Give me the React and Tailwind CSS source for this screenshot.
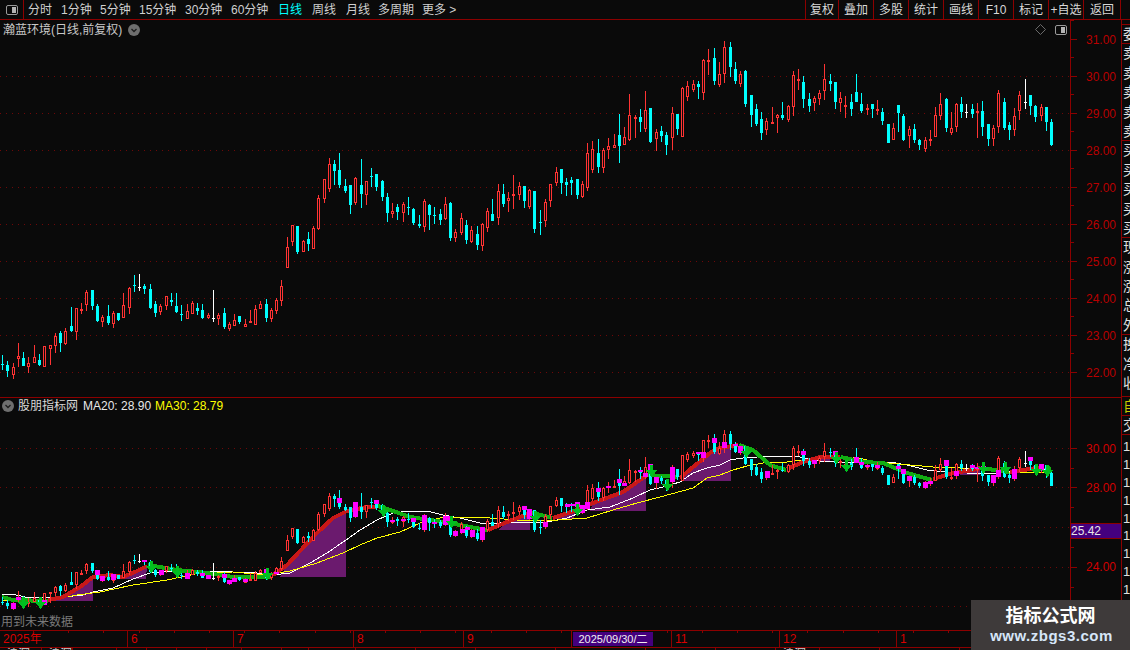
const A = [
[7,'c',285,312,315,330],[22,'c',303,315,333,350],[40,'r',309,321,345,358],[55,'r',249,288,297,320],[70,'c',276,294,318,318],[85,'r',291,309,321,338],[103,'r',255,291,309,309],[118,'c',282,300,315,318],[133,'r',258,258,321,321],[151,'r',255,255,267,315],[166,'r',219,228,258,278],[181,'c',213,219,249,275],[196,'r',204,213,252,255],[214,'c',141,198,213,216],[229,'r',144,144,216,240],[244,'r',129,148,150,162],[259,'r',90,96,135,153],[277,'c',90,90,138,150],[292,'c',132,138,183,186],[307,'r',165,171,186,201],[325,'c',135,168,189,195],[340,'r',153,159,192,204],[355,'c',159,159,180,183],[370,'r',99,135,174,174],[388,'r',81,84,144,162],[403,'c',45,75,78,96],[418,'w',42,81,84,93],[433,'c',72,78,87,102],[451,'c',72,87,144,147],[466,'c',123,132,159,171],[481,'r',132,138,156,165],[499,'r',108,108,138,150],[514,'c',99,120,126,138],[529,'c',99,138,156,159],[544,'c',135,162,165,183],[562,'r',132,153,177,177],[577,'r',123,129,162,162],[592,'c',129,144,153,165],[607,'c',132,150,174,177],[625,'r',159,165,174,177],[640,'w',90,174,177,186],[655,'r',159,165,177,195],[673,'c',144,159,201,207],[688,'r',186,192,207,213],[703,'r',162,180,198,198],[718,'c',168,168,186,192],[736,'r',177,192,201,201],[751,'r',150,183,189,189],[766,'r',135,147,195,195],[781,'r',123,132,147,147],[799,'c',117,132,174,186],[814,'r',144,150,177,186],[829,'r',114,120,153,162],[844,'r',60,78,123,138],
];
const B = [
[22,'r',291,321,384,384],[37,'r',255,255,306,318],[52,'c',258,258,336,342],[70,'r',300,303,336,336],[85,'c',276,297,312,333],[100,'r',258,264,327,327],[115,'r',165,174,267,270],[133,'r',117,117,177,189],[148,'r',54,72,147,156],[163,'c',60,72,93,135],[178,'c',39,90,135,144],[196,'c',117,138,153,159],[211,'c',135,135,195,222],[226,'r',111,114,189,195],[244,'c',57,135,162,204],[259,'r',123,123,165,195],[274,'c',84,108,111,141],[289,'c',102,102,141,153],[307,'c',120,123,171,183],[322,'c',159,171,219,246],[337,'r',189,213,222,234],[352,'c',192,201,216,240],[370,'r',186,192,219,246],[385,'c',171,201,204,225],[400,'c',204,207,249,255],[418,'c',225,252,258,264],[433,'r',177,183,261,276],[448,'c',192,195,225,270],[463,'c',201,225,228,252],[481,'c',207,222,240,255],[496,'r',171,192,237,240],[511,'c',186,189,294,303],[526,'r',267,276,294,306],[544,'r',219,234,279,285],[559,'c',240,255,300,312],[574,'r',258,270,306,309],[592,'c',258,282,315,330],[607,'r',249,252,318,333],[622,'r',204,213,264,276],[637,'c',177,222,243,243],[655,'r',132,153,234,255],[670,'c',132,162,192,201],[685,'r',156,174,183,216],[700,'r',105,162,168,207],[718,'r',126,138,165,180],[733,'c',138,138,183,204],[748,'r',147,150,201,207],[763,'c',153,153,267,279],[781,'c',210,246,249,285],[796,'r',177,186,243,261],[811,'r',132,132,183,201],[829,'r',81,96,129,138],[844,'c',87,87,129,162],[859,'c',114,126,135,168],[874,'c',111,120,129,165],[892,'c',117,117,165,177],[907,'r',123,132,171,174],[922,'r',9,39,144,153],[937,'r',3,27,90,99],[955,'c',-3,39,81,99],[970,'r',24,30,84,99],[985,'r',-6,18,30,57],[1003,'r',-17,15,24,24],[1018,'c',-78,-15,18,69],[1033,'r',-39,-9,15,15],[1048,'r',-138,-75,0,3],[1065,'r',-75,-69,-63,-6],[1080,'c',-93,-69,-54,-24],
];
const C = [
[16,'r',183,240,297,306],[31,'c',234,234,336,339],[49,'r',297,306,327,363],[64,'c',288,303,318,336],[79,'c',306,315,345,375],[97,'r',231,249,324,360],[112,'c',252,252,297,315],[127,'r',171,174,321,321],[142,'r',153,168,201,213],[160,'r',150,162,180,186],[175,'c',153,162,171,207],[190,'r',87,90,189,210],[205,'r',57,90,93,135],[223,'c',54,84,153,165],[238,'r',96,132,165,171],[253,'r',33,51,132,159],[271,'c',36,51,111,141],[286,'c',96,117,153,162],[301,'r',123,132,162,171],[316,'c',120,123,222,231],[334,'c',195,195,255,291],[349,'c',222,237,282,288],[364,'c',246,267,309,330],[379,'r',264,273,300,315],[397,'r',231,276,279,282],[412,'r',252,255,264,309],[427,'c',216,255,264,270],[445,'r',225,228,270,276],[460,'r',123,135,231,258],[475,'r',117,147,150,180],[490,'c',138,156,207,234],[508,'c',189,207,228,246],[523,'r',198,204,219,243],[538,'r',180,189,207,225],[553,'r',102,147,183,210],[571,'c',132,153,162,183],[586,'c',156,156,216,237],[601,'r',186,204,219,246],[616,'r',198,225,228,264],[634,'c',192,216,237,258],[649,'c',132,186,216,216],[664,'c',189,222,243,249],[682,'r',222,234,240,255],[697,'c',222,222,237,264],[712,'r',210,237,243,255],[727,'c',234,246,273,285],[745,'c',282,282,339,339],[760,'r',279,294,330,330],[775,'c',225,225,249,306],[790,'c',252,258,330,333],[808,'r',288,297,318,354],[823,'c',282,297,330,339],[838,'c',327,330,345,360],[856,'r',321,330,357,366],[871,'r',300,327,333,348],[886,'r',231,255,321,321],[901,'r',189,222,258,270],[919,'c',204,207,294,306],[934,'r',246,294,309,315],[949,'r',219,222,291,306],[964,'c',201,222,246,264],[979,'w',222,246,249,264],[997,'c',222,237,252,264],[1012,'r',219,243,249,324],[1027,'c',213,243,291,318],[1045,'c',282,282,327,348],[1060,'r',285,294,327,348],[1075,'r',180,189,291,309],[1093,'c',204,216,294,300],[1108,'c',276,285,300,330],[1123,'r',234,258,300,318],[1138,'r',183,195,243,270],[1156,'w',147,216,219,237],[1171,'c',195,195,228,255],[1186,'c',225,228,261,276],[1204,'r',222,231,258,273],[1219,'c',231,231,276,303],[1234,'c',267,276,345,348],
];
const toReal = (list, x0, y0) => list.map(([zx, t, a, b, c, d]) => ({ x: Math.floor(x0 + zx / 3), t, hi: y0 + a / 3, top: y0 + b / 3, bot: y0 + c / 3, lo: y0 + d / 3 }));
const candles = [...toReal(A, 0, 260), ...toReal(B, 280, 140), ...toReal(C, 640, 30)];

const COLORS = { r: '#ff3333', c: '#00ffff', w: '#ffffff' };
function Candle({ d, map }) {
  const hi = Math.round(map(d.hi)), top = Math.round(map(d.top)), bot = Math.round(map(d.bot)), lo = Math.round(map(d.lo));
  const col = COLORS[d.t];
  return (
    <g>
      <rect x={d.x} y={hi} width={1} height={Math.max(lo - hi, 1)} fill={col} />
      {d.t === 'r' ? (
        <rect x={d.x - 0.5} y={top + 0.5} width={2} height={Math.max(bot - top - 1, 1)} fill="#0a0a0a" stroke={col} strokeWidth={1} />
      ) : d.t === 'w' ? (
        <rect x={d.x - 1} y={top} width={3} height={1} fill={col} />
      ) : (
        <rect x={d.x - 1} y={top} width={3} height={Math.max(bot - top, 1)} fill={col} />
      )}
    </g>
  );
}
const same = (y) => y;
const low = (y) => 449 + (y - 76) * 0.5315;

const UPPER_GRID = [76, 113, 150, 187, 224, 261, 298, 335, 372];
const LOWER_GRID = [448, 487, 527, 567, 606];
const Grid = ({ ys }) => ys.map((y) => <line key={y} x1="0" x2="1070" y1={y + 0.5} y2={y + 0.5} stroke="#6e0808" strokeWidth="1" strokeDasharray="1 5" />);

const WHITE = '2,594 16,595 30,598 63,597 83,595 93,592 113,588 133,579 150,573 170,571 190,571 213,571 233,572 257,573 273,575 290,573 310,563 327,553 346,540 360,530 377,520 393,513 410,511 427,511 443,515 460,518 480,523 500,523 527,522 547,522 567,518 587,510 610,507 633,498 650,490 663,487 680,482 693,473 707,468 720,465 730,460 743,458 757,457 770,456 785,456 800,457 820,461 837,462 860,462 890,462 907,465 927,470 947,472 967,473 997,473 1020,470 1047,469';
const YELLOW = '2,600 50,600 77,595 100,592 133,585 167,580 200,573 233,572 267,575 290,571 317,563 343,553 360,545 377,538 400,532 420,523 440,518 457,517 473,517 490,518 517,520 543,521 587,518 613,510 637,503 660,497 693,488 707,478 720,475 733,470 747,466 763,463 787,462 820,458 853,457 877,462 910,465 933,467 960,468 980,468 1007,472 1030,472 1050,473';
const RED = [
  '48,600 63,597 80,587 93,577 110,575 123,577 135,572 147,566',
  '273,575 287,565 300,551 317,533 333,518 347,511 367,507 377,507',
  '488,530 507,522 530,513',
  '553,518 577,510 593,503 623,492 647,475',
  '680,478 693,467 710,453 720,448 738,445',
  '787,469 803,462 820,457 840,457',
  '933,479 953,473 973,470 980,468',
  '1010,472 1030,469 1044,467',
];
const GREEN = [
  '2,597 13,600 48,601',
  '148,565 177,570 207,573 233,577 272,577',
  '378,506 393,511 410,517 430,520 450,523 470,527 487,530',
  '530,512 552,518',
  '648,475 677,477',
  '739,445 753,450 770,465 786,470',
  '841,457 863,462 883,463 907,473 932,480',
  '981,468 1009,472',
  '1045,467 1051,469',
];
const PURPLE = [
  '45,601 63,597 80,587 93,578 93,601',
  '123,579 135,572 147,566 146,579',
  '280,577 287,565 300,551 317,533 333,518 346,511 346,577',
  '498,530 507,522 530,513 530,530',
  '552,519 577,510 573,519',
  '590,511 593,503 623,492 646,477 646,511',
  '682,481 682,478 693,467 710,453 731,447 731,481',
  '820,458 830,458 830,462 820,462',
  '960,470 980,470 980,475 960,475',
];
const MAGENTA = [[13,603,608],[18,597,599],[44,600,604],[97,570,574],[102,576,580],[113,574,579],[144,560,561],[161,570,574],[187,573,578],[202,573,575],[208,575,578],[224,574,577],[229,580,583],[234,578,581],[245,579,581],[266,569,572],[276,572,573],[339,498,502],[355,502,516],[376,500,503],[392,520,521],[403,519,520],[413,518,521],[424,515,529],[434,522,523],[445,516,524],[450,516,521],[455,531,535],[462,529,532],[467,527,529],[472,530,536],[482,527,539],[524,506,509],[529,509,518],[545,522,526],[567,504,506],[572,504,505],[577,502,506],[582,505,512],[587,502,508],[598,488,491],[608,486,487],[619,479,482],[624,483,485],[640,470,471],[645,473,476],[650,464,470],[656,477,482],[672,467,481],[698,452,453],[703,452,457],[714,438,442],[724,442,447],[735,444,445],[740,446,452],[767,471,477],[803,451,454],[814,460,463],[835,451,454],[856,457,462],[861,462,464],[867,465,466],[877,465,467],[898,466,468],[903,469,473],[909,476,480],[925,482,487],[930,481,483],[946,460,465],[956,471,475],[972,465,467],[977,467,468],[983,466,469],[993,475,482],[998,470,476],[1014,469,478],[1030,457,460],[1041,464,470]];
const ARROWS = [[23,609],[40,609],[151,573],[177,578],[267,580],[383,517],[451,528],[535,523],[577,516],[651,477],[667,491],[746,458],[836,464],[846,472],[983,474],[1005,474],[1036,476],[1047,477]];

function Logo() {
  return (
    <svg width="12" height="10" viewBox="0 0 12 10">
      <rect x="0.5" y="0.5" width="11" height="9" rx="1.5" fill="none" stroke="#9a9a9a" />
      <rect x="6" y="2" width="4" height="6" fill="#b4b4b4" />
    </svg>
  );
}
function Chevron({ size = 12 }) {
  return (
    <svg width={size} height={size} viewBox="0 0 12 12">
      <circle cx="6" cy="6" r="6" fill="#6e6e6e" />
      <path d="M3.5 5 L6 7.5 L8.5 5" fill="none" stroke="#1c1c1c" strokeWidth="1.3" />
    </svg>
  );
}

const CN = "[font-family:'Liberation_Sans','Noto_Sans_CJK_SC',sans-serif]";
const LEFT_TABS = [['分时', 33, '#d0d0d0'], ['1分钟', 39, '#d0d0d0'], ['5分钟', 39, '#d0d0d0'], ['15分钟', 46, '#d0d0d0'], ['30分钟', 46, '#d0d0d0'], ['60分钟', 47, '#d0d0d0'], ['日线', 34, '#00ffff'], ['周线', 34, '#d0d0d0'], ['月线', 32, '#d0d0d0'], ['多周期', 44, '#d0d0d0'], ['更多 >', 40, '#d0d0d0']];
const RIGHT_BTNS = [['复权', 33], ['叠加', 35], ['多股', 35], ['统计', 35], ['画线', 35], ['F10', 35], ['标记', 35], ['+自选', 35], ['返回', 37]];

function TopBar() {
  return (
    <div className="flex h-[20px] items-stretch border-b border-[#8c0000] text-[12px] leading-none">
      <div className="flex w-[24px] items-center justify-center border-r border-[#8c0000]"><Logo /></div>
      <div className="flex items-center pl-[4px]">
        {LEFT_TABS.map(([t, w, c]) => (
          <div key={t} className="whitespace-pre" style={{ width: w, color: c }}>{t}</div>
        ))}
      </div>
      <div className="ml-auto mr-[9px] flex">
        {RIGHT_BTNS.map(([t, w]) => (
          <div key={t} className="flex items-center justify-center border-l border-[#8c0000] text-[#d8d8d8]" style={{ width: w }}>{t}</div>
        ))}
        <div className="w-0 border-l border-[#8c0000]" />
      </div>
    </div>
  );
}

function UpperChart() {
  return (
    <div className="relative h-[378px] w-[1070px]">
      <svg width="1070" height="378" viewBox="0 20 1070 378" shapeRendering="crispEdges" className="block">
        <Grid ys={UPPER_GRID} />
        {candles.map((d, i) => <Candle key={i} d={d} map={same} />)}
      </svg>
      <div className="absolute left-[3px] top-[3px] flex items-center gap-[6px] text-[12px] leading-[14px] text-[#c8c8c8]">
        <span>瀚蓝环境(日线,前复权)</span>
        <Chevron />
      </div>
      <div className="absolute right-[3px] top-[4px] flex items-center gap-[9px]">
        <svg width="11" height="11" viewBox="0 0 11 11"><path d="M5.5 0.5 L10.5 5.5 L5.5 10.5 L0.5 5.5 Z" fill="none" stroke="#6a6a6a" /></svg>
        <Logo />
      </div>
    </div>
  );
}

function LowerChart() {
  return (
    <div className="relative h-[232px] w-[1070px]">
      <svg width="1070" height="232" viewBox="0 398 1070 232" className="block">
        <g shapeRendering="crispEdges">
          <Grid ys={LOWER_GRID} />
          {PURPLE.map((p, i) => <polygon key={i} points={p} fill="#6b1a6e" />)}
        </g>
        <g fill="none" shapeRendering="crispEdges">
          <polyline points={WHITE} stroke="#ffffff" strokeWidth="1" />
          <polyline points={YELLOW} stroke="#ffff00" strokeWidth="1" />
          {RED.map((p, i) => <polyline key={i} points={p} stroke="#c81818" strokeWidth="4" />)}
          {GREEN.map((p, i) => <polyline key={i} points={p} stroke="#12ad12" strokeWidth="4" />)}
        </g>
        <g shapeRendering="crispEdges">
          {candles.map((d, i) => <Candle key={i} d={d} map={low} />)}
          {MAGENTA.map(([x, a, b], i) => <rect key={i} x={x - 2} y={a} width={5} height={b - a + 1} fill="#ff00ff" />)}
          {ARROWS.map(([x, y], i) => (
            <g key={i} fill="#00c020">
              <rect x={x - 1} y={y - 12} width={3} height={6} />
              <polygon points={`${x - 5},${y - 7} ${x + 6},${y - 7} ${x + 0.5},${y}`} />
            </g>
          ))}
        </g>
      </svg>
      <div className="absolute left-[2px] top-[1px] flex items-center text-[12px] leading-[14px]">
        <Chevron />
        <span className="ml-[4px] text-[#d8d8d8]">股朋指标网</span>
        <span className="ml-[5px] text-[#e8e8e8]">MA20: 28.90</span>
        <span className="ml-[4px] text-[#ffff00]">MA30: 28.79</span>
      </div>
      <div className="absolute bottom-[1px] left-[1px] text-[12px] leading-[14px] text-[#7a7a7a]">用到未来数据</div>
    </div>
  );
}

function UpperAxis() {
  const labels = ['31.00', '30.00', '29.00', '28.00', '27.00', '26.00', '25.00', '24.00', '23.00', '22.00'];
  return (
    <div className="relative h-[378px] w-[51px] border-l border-[#8c0000] pt-[1px]">
      <svg width="8" height="378" className="absolute left-0 top-0" shapeRendering="crispEdges">
        {labels.map((l, i) => <rect key={l} x="0" y={19 + 37 * i} width="6" height="1" fill="#8c0000" />)}
        {labels.map((l, i) => <rect key={l} x="0" y={37 * i} width="3" height="1" fill="#8c0000" />)}
      </svg>
      {labels.map((l) => (
        <div key={l} className="flex h-[37px] items-center pl-[15px] text-[12px] leading-none text-[#b80000]">{l}</div>
      ))}
    </div>
  );
}

function LowerAxis() {
  const rows = [
    ['30.00', 39],
    ['28.00', 40],
    ['', 39],
    ['24.00', 39],
    ['', 39],
  ];
  return (
    <div className="relative h-[232px] w-[51px] border-l border-[#8c0000] pt-[31px]">
      <svg width="8" height="232" className="absolute left-0 top-0" shapeRendering="crispEdges">
        {[50, 89, 129, 169, 208].map((y) => <rect key={y} x="0" y={y} width="6" height="1" fill="#8c0000" />)}
        {[70, 109, 149, 189].map((y) => <rect key={y} x="0" y={y} width="3" height="1" fill="#8c0000" />)}
      </svg>
      {rows.map(([l, h], i) => (
        <div key={i} className="flex items-center pl-[15px] text-[12px] leading-none text-[#d00000]" style={{ height: h }}>{l}</div>
      ))}
      <div className="absolute left-0 top-[125px] flex h-[16px] w-[50px] items-center border-y border-[#8c0000] bg-[#44007e] text-[12px] leading-none text-[#e8e8e8]">25.42</div>
    </div>
  );
}

const STRIP = ['委比', '卖五', '卖四', '卖三', '卖二', '卖一', '买一', '买二', '买三', '买四', '买五', '现价', '涨跌', '涨幅', '总量', '外盘', '换手', '净资', '收益'];
const DIVIDED = new Set([0, 5, 10, 15]);

function SideStrip() {
  return (
    <div className="flex h-[611px] w-[9px] flex-col overflow-hidden border-l border-[#8c0000] pl-[1px] text-[14px] leading-[19px] text-[#e0e0e0]">
      <div className="-ml-[1px] h-[5px] shrink-0 border-b border-[#8c0000]" />
      {STRIP.map((t, i) => (
        <div key={t} className={`h-[19.4px] shrink-0 whitespace-nowrap ${DIVIDED.has(i) ? '-ml-[1px] border-b border-[#8c0000] pl-[1px]' : ''}`}>{t}</div>
      ))}
      <div className="-ml-[1px] mt-[3px] h-[20px] shrink-0 whitespace-nowrap border-y border-[#8c0000] pl-[1px] text-[#c8c800]">自选</div>
      <div className="-ml-[1px] h-[19px] shrink-0 whitespace-nowrap border-b border-[#8c0000] pl-[1px]">交易</div>
      <div className="pt-[3px] text-[13px] leading-[17.8px]">
        {Array.from({ length: 11 }).map((_, i) => <div key={i} className="whitespace-nowrap">1234</div>)}
      </div>
    </div>
  );
}

const DATE_CELLS = [['2025年', 128], ['6', 106], ['7', 120], ['8', 110], ['9', 108], ['', 100], ['11', 108], ['12', 117], ['1', 173]];
const LOW_CELLS = [42, 31, 44, 30, 30, 30, 35, 40, 27, 47, 60, 60, 80, 90, 70, 60, 44, 60, 80, 80, 88];
const LOW_TEXT = new Set([0, 1, 16]);

function DateBar() {
  return (
    <div className="relative flex h-[17px] w-[1070px] border-b border-[#8c0000] text-[12px] leading-[16px] text-[#d80000]">
      {DATE_CELLS.map(([t, w], i) => (
        <div key={i} className={`flex shrink-0 items-start pl-[3px] ${i < 8 ? 'border-r border-[#8c0000]' : ''}`} style={{ width: w }}>
          {t || <span className="ml-[-2px] mt-[1px] block h-[14px] w-[80px] bg-[#44007e] text-center text-[11px] leading-[14px] text-[#f0f0f0]">2025/09/30/二</span>}
        </div>
      ))}
      <svg width="1070" height="3" className="absolute left-0 top-0" shapeRendering="crispEdges">
        {Array.from({ length: 30 }).map((_, i) => <rect key={i} x={33 + i * 35.2} y="0" width="1" height="2" fill="#8c0000" />)}
      </svg>
    </div>
  );
}

function BottomRow() {
  return (
    <div className="flex h-[3px] overflow-hidden text-[12px] leading-[12px] text-[#d0d0d0]">
      {LOW_CELLS.map((w, i) => (
        <div key={i} className="shrink-0 overflow-hidden whitespace-nowrap border-r border-[#8c0000] pl-[6px]" style={{ width: w }}>{LOW_TEXT.has(i) ? '沪深' : ''}</div>
      ))}
    </div>
  );
}

export default function App() {
  return (
    <div className={`relative h-[650px] w-[1130px] overflow-hidden bg-[#0a0a0a] ${CN}`}>
      <TopBar />
      <div className="flex">
        <div className="w-[1121px]">
          <div className="flex">
            <UpperChart />
            <UpperAxis />
          </div>
          <div className="relative z-10 -mt-px h-0 border-t border-[#8c0000]" />
          <div className="flex">
            <LowerChart />
            <LowerAxis />
          </div>
        </div>
        <SideStrip />
      </div>
      <div className="relative z-10 -mt-px h-0 border-t border-[#8c0000]" />
      <DateBar />
      <BottomRow />
      <div className="absolute bottom-0 right-0 z-20 flex h-[50px] w-[159px] flex-col items-center bg-[#3e3a3a]">
        <div className="pt-[5px] text-[18px] font-bold leading-[22px] text-white">指标公式网</div>
        <div className="pl-[2px] text-[15px] font-bold leading-[18px] tracking-[0.5px] text-[#d6e6f8]">www.zbgs3.com</div>
      </div>
    </div>
  );
}
